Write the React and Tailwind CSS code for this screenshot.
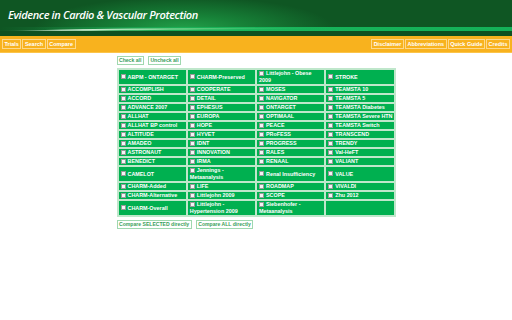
import React from "react";

const rows = [
  [["ABPM - ONTARGET"], ["CHARM-Preserved"], ["Littlejohn - Obese", "2009"], ["STROKE"]],
  [["ACCOMPLISH"], ["COOPERATE"], ["MOSES"], ["TEAMSTA 10"]],
  [["ACCORD"], ["DETAIL"], ["NAVIGATOR"], ["TEAMSTA 5"]],
  [["ADVANCE 2007"], ["EPHESUS"], ["ONTARGET"], ["TEAMSTA Diabetes"]],
  [["ALLHAT"], ["EUROPA"], ["OPTIMAAL"], ["TEAMSTA Severe HTN"]],
  [["ALLHAT BP control"], ["HOPE"], ["PEACE"], ["TEAMSTA Switch"]],
  [["ALTITUDE"], ["HYVET"], ["PRoFESS"], ["TRANSCEND"]],
  [["AMADEO"], ["IDNT"], ["PROGRESS"], ["TRENDY"]],
  [["ASTRONAUT"], ["INNOVATION"], ["RALES"], ["Val-HeFT"]],
  [["BENEDICT"], ["IRMA"], ["RENAAL"], ["VALIANT"]],
  [["CAMELOT"], ["Jennings -", "Metaanalysis"], ["Renal Insufficiency"], ["VALUE"]],
  [["CHARM-Added"], ["LIFE"], ["ROADMAP"], ["VIVALDI"]],
  [["CHARM-Alternative"], ["Littlejohn 2009"], ["SCOPE"], ["Zhu 2012"]],
  [["CHARM-Overall"], ["Littlejohn -", "Hypertension 2009"], ["Siebenhofer -", "Metaanalysis"], null],
];

function Box() {
  return (
    <span className="inline-block w-[5px] h-[5px] bg-[#f4f4f4] border border-[#9a9a9a] mr-[2px] align-[-0.5px]" />
  );
}

function NavBtn({ children }) {
  return (
    <span className="h-[10px] px-[1.5px] border border-[#fdd98c] text-white font-bold text-[5.5px] leading-[8px] flex items-center">
      {children}
    </span>
  );
}

function GreenBtn({ children }) {
  return (
    <span className="h-[9px] px-[1.5px] bg-white border border-[#9fd8af] text-[#39a05a] font-bold text-[5.1px] leading-[7px] flex items-center">
      {children}
    </span>
  );
}

export default function App() {
  return (
    <div className="w-[512px] h-[320px] bg-white overflow-hidden font-['Liberation_Sans',Arial,sans-serif]">
      {/* Header */}
      <div className="relative h-[36px] bg-[#0f5623] bg-[radial-gradient(ellipse_150px_32px_at_36%_80%,#22a04a_0%,#178238_40%,transparent_100%)]">
        <svg className="absolute left-0 top-0" width="512" height="36" viewBox="0 0 512 36">
          <defs>
            <linearGradient id="sw" x1="0" x2="1" y1="0" y2="0">
              <stop offset="0" stopColor="#ffffff" stopOpacity="0" />
              <stop offset="0.25" stopColor="#e8fbe8" stopOpacity="0.9" />
              <stop offset="0.6" stopColor="#7fd88f" stopOpacity="0.7" />
              <stop offset="1" stopColor="#19b45a" stopOpacity="0" />
            </linearGradient>
            <linearGradient id="st" x1="0" x2="1" y1="0" y2="0">
              <stop offset="0" stopColor="#19b45a" stopOpacity="0" />
              <stop offset="0.2" stopColor="#19b45a" stopOpacity="0.4" />
              <stop offset="0.45" stopColor="#18b45a" stopOpacity="1" />
              <stop offset="1" stopColor="#14b058" stopOpacity="1" />
            </linearGradient>
          </defs>
          <rect x="0" y="27" width="512" height="4" fill="url(#st)" />
          <path d="M0 31 C 40 30, 80 29, 130 28.5 L 330 27.5 L 330 29 C 200 29.5, 100 30.5, 0 32 Z" fill="url(#sw)" />
          <rect x="0" y="31" width="512" height="5" fill="#0e5020" />
        </svg>
        <div className="relative pl-[8px] pt-[8px] text-white italic font-semibold text-[11px] leading-[14px] tracking-[-0.35px] font-['Open_Sans',sans-serif]">
          Evidence in Cardio &amp; Vascular Protection
        </div>
      </div>

      {/* Nav bar */}
      <div className="h-[17px] bg-[#f8b21e] border-b border-[#fbc44a] flex items-center justify-between px-[2px]">
        <div className="flex gap-[1px]">
          <NavBtn>Trials</NavBtn>
          <NavBtn>Search</NavBtn>
          <NavBtn>Compare</NavBtn>
        </div>
        <div className="flex gap-[1px]">
          <NavBtn>Disclaimer</NavBtn>
          <NavBtn>Abbreviations</NavBtn>
          <NavBtn>Quick Guide</NavBtn>
          <NavBtn>Credits</NavBtn>
        </div>
      </div>

      {/* Content */}
      <div className="w-[279px] mx-auto pt-[3px]">
        <div className="flex gap-[4px]">
          <GreenBtn>Check all</GreenBtn>
          <GreenBtn>Uncheck all</GreenBtn>
        </div>
        <table className="mt-[3px] w-[279px] table-fixed border-separate border-spacing-[2px] bg-[#bfe7cb]">
          <tbody>
            {rows.map((r, i) => (
              <tr key={i}>
                {r.map((c, j) => (
                  <td
                    key={j}
                    className="bg-[#00b050] text-white font-bold text-[5.4px] leading-[7px] px-[2px] py-0 align-middle whitespace-nowrap overflow-hidden"
                  >
                    {c && (
                      <>
                        <Box />
                        {c[0]}
                        {c[1] && (
                          <>
                            <br />
                            {c[1]}
                          </>
                        )}
                      </>
                    )}
                  </td>
                ))}
              </tr>
            ))}
          </tbody>
        </table>
        <div className="flex gap-[4px] mt-[3px]">
          <GreenBtn>Compare SELECTED directly</GreenBtn>
          <GreenBtn>Compare ALL directly</GreenBtn>
        </div>
      </div>
    </div>
  );
}
